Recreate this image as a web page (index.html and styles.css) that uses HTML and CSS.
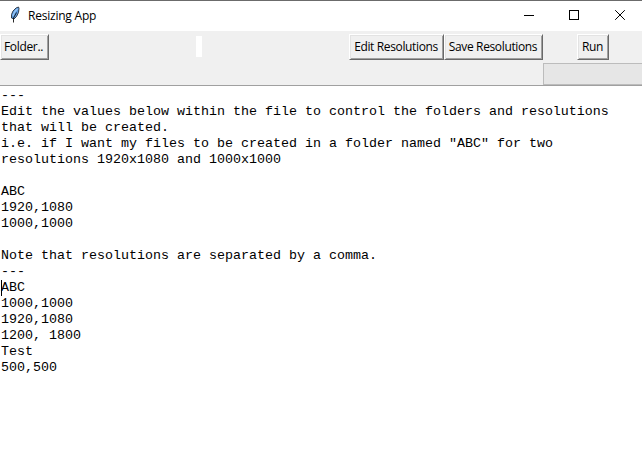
FILE: index.html
```html
<!DOCTYPE html>
<html lang="en">
<head>
<meta charset="utf-8">
<title>Resizing App</title>
<link rel="stylesheet" href="styles.css">
</head>
<body>
<div class="window">
  <header class="titlebar">
    <svg class="feather" width="12" height="18" viewBox="0 0 12 18">
      <path d="M2.500 12 2.500 8.500 4 5 7 2 9.500 1l.5 1.500-.5 4L7.500 10.500 5 13Z" fill="#5c9be0" stroke="#26303d" stroke-width=".9"/>
      <path d="M4 10 5.500 6 8.500 2.800" fill="none" stroke="#9cc8f5" stroke-width="1.300"/>
      <path d="M4.500 16.500 4.500 12 7.500 6.500" fill="none" stroke="#111" stroke-width=".9"/>
    </svg>
    <span class="title">Resizing App</span>
    <svg class="controls" width="104" height="12" viewBox="0 0 104 12" fill="none" stroke="#000">
      <path d="M0 6.500h10M45.500 1.500h9v9h-9Z" shape-rendering="crispEdges"/>
      <path d="m91.200 1.200 9.600 9.600m0-9.600-9.600 9.600"/>
    </svg>
  </header>
  <div class="toolbar">
    <div class="cell folder-cell"><button class="btn folder">Folder..</button></div>
    <div class="cell label-cell"><span class="empty-label"></span></div>
    <button class="btn edit">Edit Resolutions</button>
    <button class="btn save">Save Resolutions</button>
    <div class="cell run-cell"><button class="btn run">Run</button></div>
    <div class="progress"></div>
  </div>
  <pre class="editor">---
Edit the values below within the file to control the folders and resolutions
that will be created.
i.e. if I want my files to be created in a folder named "ABC" for two
resolutions 1920x1080 and 1000x1000

ABC
1920,1080
1000,1000

Note that resolutions are separated by a comma.
---
<span class="caret"></span>ABC
1000,1000
1920,1080
1200, 1800
Test
500,500</pre>
</div>
</body>
</html>
```
FILE: styles.css
```css
* { box-sizing: border-box; }
body { margin: 0; background: #fff; color: #000; }
.window {
  display: flex;
  flex-direction: column;
  width: 642px;
  height: 473px;
  overflow: hidden;
}
.titlebar {
  display: flex;
  align-items: center;
  height: 31px;
  padding: 0 17px 0 9px;
  border-top: 1px solid #6b6b6b;
  font: 12px/16px "Open Sans", "Noto Sans", sans-serif;
}
.feather { margin-top: -2px; }
.title { margin-left: 7px; letter-spacing: -0.22px; }
.controls { margin: -2px -3px 0 auto; }
.toolbar {
  display: grid;
  grid-template-columns: 49px 300px 95px 99px 99px;
  grid-template-rows: 26px 22px;
  row-gap: 3px;
  height: 55px;
  padding-top: 3px;
  background: #f0f0f0;
  border-bottom: 1px solid #a0a0a0;
}
.cell { display: flex; justify-content: center; align-items: center; }
.btn {
  width: 100%;
  height: 26px;
  margin: 0;
  padding: 0;
  background: #f0f0f0;
  border: 1px solid;
  border-color: #fff #696969 #696969 #fff;
  border-radius: 0;
  box-shadow: inset 1px 1px #e3e3e3, inset -1px -1px #a0a0a0;
  color: #000;
  font: 12px/16px "Open Sans", "Noto Sans", sans-serif;
  white-space: nowrap;
}
.folder { letter-spacing: -0.32px; padding-right: 2px; }
.edit, .save { padding-right: 1px; letter-spacing: -0.36px; }
.run { width: 32px; padding-right: 1px; letter-spacing: -0.4px; }
.empty-label { width: 6px; height: 21px; margin: 0 0 1px 0; background: #fff; }
.progress {
  grid-column: 5;
  grid-row: 2;
  height: 22px;
  background: #e6e6e6;
  border: 1px solid #bcbcbc;
  border-right: 0;
}
.run-cell { justify-content: flex-start; padding-left: 34px; }
.editor {
  position: relative;
  flex: 1;
  margin: 0;
  padding: 2px 0 0 1px;
  font: 13.333px/16px "Liberation Mono", "Courier New", monospace;
}
.caret {
  display: inline-block;
  width: 1px;
  height: 16px;
  margin-right: -1px;
  background: #000;
  vertical-align: top;
}
```
